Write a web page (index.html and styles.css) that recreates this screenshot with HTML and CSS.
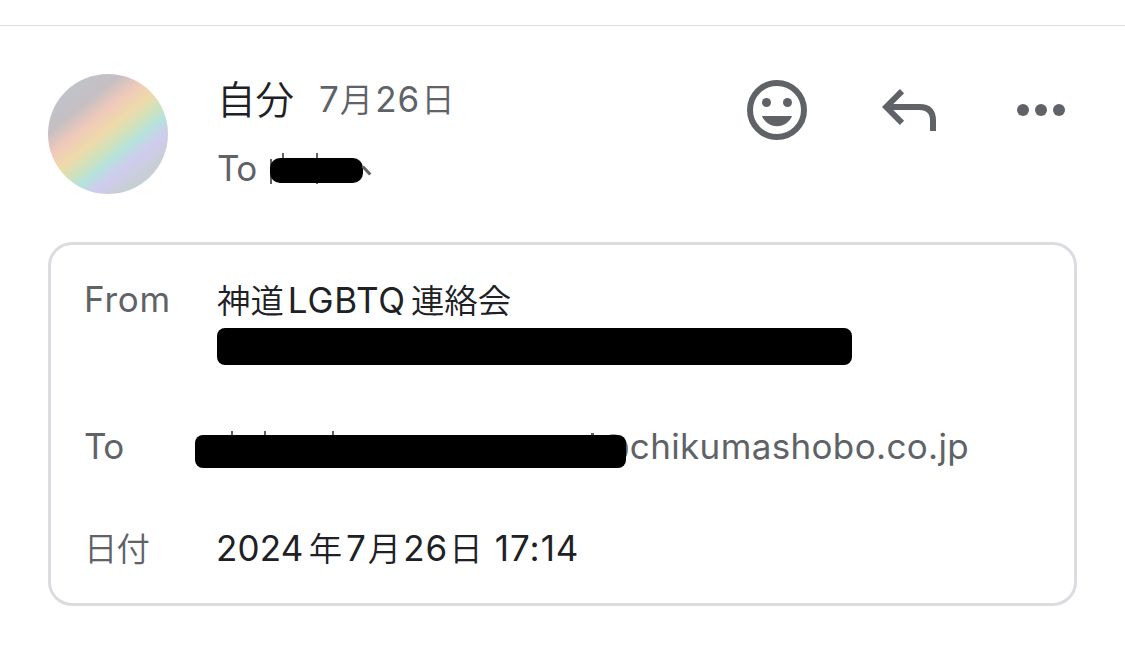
FILE: index.html
```
<!DOCTYPE html>
<html lang="ja">

<head>
    <meta charset="UTF-8">
    <title>Mail</title>
    <link rel="stylesheet" href="styles.css">
</head>

<body>
    <div class="message">
        <div class="header">
            <div class="avatar"></div>
            <div class="summary">
                <div class="sender">
                    <span class="name">自分</span>
                    <span class="date">7<span class="kanji month">月</span>26<span class="kanji day">日</span></span>
                </div>
                <div class="recipient">
                    <span class="to">To</span>
                    <span class="mask mask-name">
                        <i class="tick t1"></i><i class="tick t2"></i><i class="tick t3"></i><i class="tick t4"></i>
                    </span>
                </div>
            </div>
            <div class="actions">
                <svg class="smile" width="60" height="60" viewBox="0 0 60 60">
                    <circle cx="30" cy="30" r="27" fill="none" stroke="currentColor" stroke-width="6" />
                    <circle cx="19.5" cy="22.5" r="4.5" />
                    <circle cx="40.5" cy="22.5" r="4.5" />
                    <path d="M15 36h30c-2.3 6-8 10.200-15 10.200S17.300 42 15 36z" />
                </svg>
                <svg class="reply" width="54" height="42" viewBox="0 0 54 42">
                    <path d="M20 2.200L4.200 18L20 33.800M4.200 18H37.500Q51 18 51 31.500V42" fill="none" stroke="currentColor" stroke-width="6" />
                </svg>
                <svg class="more" width="48" height="12" viewBox="0 0 48 12">
                    <circle cx="6" cy="6" r="6" />
                    <circle cx="24" cy="6" r="6" />
                    <circle cx="42" cy="6" r="6" />
                </svg>
            </div>
        </div>

        <div class="details">
            <div class="row row-from">
                <div class="label">From</div>
                <div class="value">
                    <div><span class="kanji">神道</span><span class="group">LGBTQ</span><span class="kanji">連絡会</span></div>
                    <div class="mask mask-from"></div>
                </div>
            </div>
            <div class="row row-to">
                <div class="label"><span class="to">To</span></div>
                <div class="value address">
                    <span class="at">@</span><span class="domain">chikumashobo.co.jp</span>
                    <span class="mask mask-to">
                        <i class="tick t1"></i><i class="tick t2"></i><i class="tick t3"></i><i class="tick t4"></i>
                    </span>
                </div>
            </div>
            <div class="row">
                <div class="label kanji">日付</div>
                <div class="value when"><span class="year">2024</span><span class="kanji">年</span><span class="seven">7</span><span class="kanji month">月</span>26<span class="kanji day">日</span><span class="time">17:14</span></div>
            </div>
        </div>
    </div>
</body>

</html>
```

FILE: styles.css
```
* {
    box-sizing: border-box;
}

body {
    margin: 0;
    padding-top: 25px;
    font-family: Inter, "Noto Sans CJK JP", sans-serif;
    font-size: 35px;
    line-height: 48px;
    color: #202124;
    background-color: #fff;
}

.message {
    border-top: 1px solid #dedfe0;
    padding: 47px 48px 0;
}

.header {
    display: flex;
    height: 169px;
}

.avatar {
    width: 120px;
    height: 120px;
    margin-top: 1px;
    border-radius: 50%;
    background: linear-gradient(141deg, #bfc4cb 12%, #c5bfc3 27%, #efc9ba 38%, #eedaaa 48%, #cfe2bb 56%, #b6e2dc 63%, #d0cbee 72%, #c7cfd5 82%, #c2cdd4 100%);
}

.summary {
    margin-left: 49px;
    white-space: nowrap;
}

.sender {
    display: flex;
    align-items: center;
    height: 51px;
}

.name {
    padding-bottom: 3px;
    font-family: "Noto Sans CJK JP", sans-serif;
    font-size: 38.5px;
    font-weight: 350;
}

.date {
    margin-left: 25px;
    letter-spacing: 1px;
    color: #5f6368;
}

.kanji {
    font-family: "Noto Sans CJK JP", sans-serif;
    font-weight: 350;
    font-size: 33.4px;
    letter-spacing: 0;
}

.month {
    margin-right: 2px;
}

.day {
    margin-left: 1px;
}

.recipient {
    display: flex;
    align-items: center;
    margin-top: 20px;
    color: #5f6368;
}

.to {
    letter-spacing: -0.5px;
}

.mask {
    display: block;
    background-color: #000;
}

.mask-name {
    position: relative;
    width: 93px;
    height: 25px;
    margin: 5px 0 0 13px;
    border-radius: 10px;
}

.tick {
    position: absolute;
    width: 2px;
    background-color: #5f6368;
}

.mask-name .t1 {
    left: 0;
    top: 1px;
    height: 25px;
    z-index: -1;
}

.mask-name .t2 {
    left: 12px;
    top: -5px;
    height: 5px;
}

.mask-name .t3 {
    left: 46px;
    top: -5px;
    height: 31px;
    z-index: -1;
}

.mask-name .t4 {
    left: 95px;
    top: 7px;
    width: 3px;
    height: 11px;
    transform: rotate(-43deg);
}

.actions {
    display: flex;
    margin-left: auto;
    color: #5f6368;
    fill: currentColor;
}

.smile {
    margin-top: 7px;
}

.reply {
    margin: 16px 0 0 75px;
}

.more {
    margin: 31px 12px 0 81px;
}

.details {
    height: 364px;
    padding: 30px 32px;
    border: 3px solid #dadce0;
    border-radius: 24px;
}

.row {
    display: flex;
}

.label {
    width: 134px;
    padding-left: 1px;
    letter-spacing: 0.8px;
    color: #5f6368;
}

.label.kanji {
    letter-spacing: -0.8px;
}

.value {
    position: relative;
    white-space: nowrap;
}

.group {
    margin: 0 5px 0 4px;
    letter-spacing: 0.8px;
}

.row-from {
    height: 147px;
}

.row-to {
    height: 101px;
}

.mask-from {
    width: 635px;
    height: 37px;
    margin-top: 4px;
    border-radius: 8px;
}

.address {
    padding-left: 379px;
    color: #5f6368;
}

.domain {
    letter-spacing: 0.35px;
}

.mask-to {
    position: absolute;
    left: -22px;
    top: 13px;
    width: 431px;
    height: 33px;
    border-radius: 8px;
}

.mask-to .tick {
    top: -4px;
    height: 4px;
}

.mask-to .t1 {
    left: 36px;
}

.mask-to .t2 {
    left: 69px;
}

.mask-to .t3 {
    left: 137px;
}

.mask-to .t4 {
    left: 396px;
    top: -2px;
    width: 3px;
    height: 2px;
}

.when {
    margin-left: -1px;
    letter-spacing: 1px;
}

.year {
    margin-right: 5px;
    letter-spacing: 0.2px;
}

.seven {
    margin: 0 1px 0 4px;
}

.time {
    margin-left: 12px;
}
```
